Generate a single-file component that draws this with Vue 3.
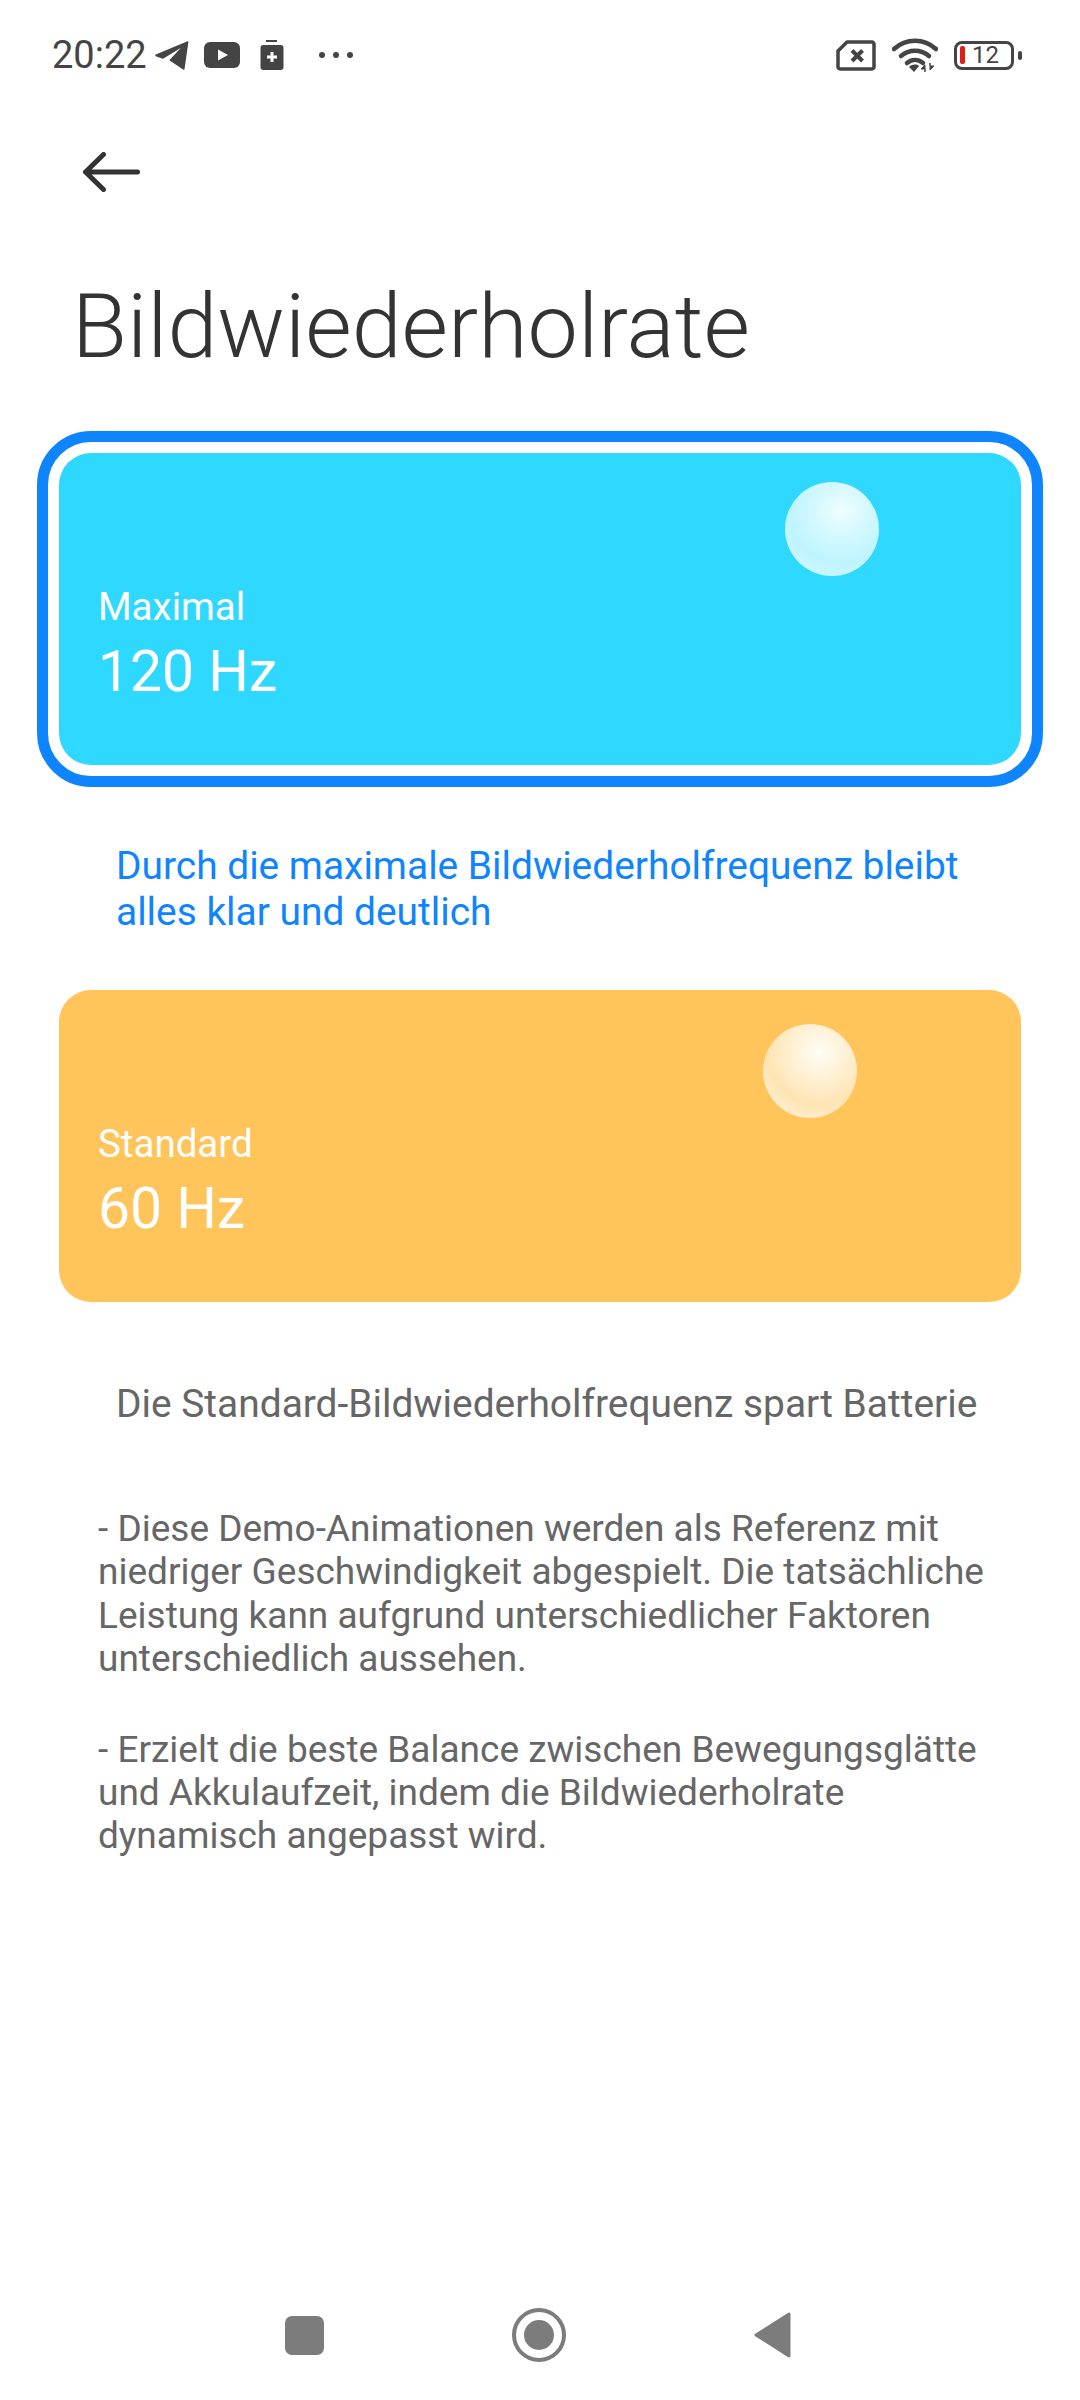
<script setup>
const notes = [
  '- Diese Demo-Animationen werden als Referenz mit niedriger Geschwindigkeit abgespielt. Die tatsächliche Leistung kann aufgrund unterschiedlicher Faktoren unterschiedlich aussehen.',
  '- Erzielt die beste Balance zwischen Bewegungsglätte und Akkulaufzeit, indem die Bildwiederholrate dynamisch angepasst wird.'
]
</script>

<template>
  <div class="page">
    <header class="status">
      <div class="status__left">
        <span class="time">20:22</span>
        <svg class="ic-telegram" width="34" height="29" viewBox="0 0 34 29">
          <path d="M.8 13.600 32.500.3c.6-.2 1 .2.9.8L29.600 27.800c-.1.900-.8 1.200-1.500.7L14.300 19.300 26 6.700 8.500 17.400c-.5.300-1 .3-1.500.1L.8 15.200c-.7-.3-.7-1.300 0-1.600Z" fill="#444" />
        </svg>
        <svg class="ic-youtube" width="36" height="26" viewBox="0 0 36 26">
          <rect x="0" y="0" width="36" height="26" rx="6" fill="#444" />
          <path d="M14 7.500v11l10-5.500Z" fill="#fff" />
        </svg>
        <svg class="ic-clip" width="24" height="30" viewBox="0 0 24 30">
          <rect x="6" y="0" width="11" height="2" fill="#444" />
          <rect x="0.500" y="5" width="23" height="25" rx="3" fill="#444" />
          <path d="M12 12v10M7 17h10" stroke="#fff" stroke-width="3" fill="none" />
        </svg>
        <svg class="ic-dots" width="34" height="8" viewBox="0 0 34 8">
          <circle cx="3" cy="4" r="3" fill="#444" />
          <circle cx="17" cy="4" r="3" fill="#444" />
          <circle cx="31" cy="4" r="3" fill="#444" />
        </svg>
      </div>
      <div class="status__right">
        <svg width="40" height="31" viewBox="0 0 40 31">
          <path d="M11 2h25c1 0 2 1 2 2v23c0 1-1 2-2 2H4c-1 0-2-1-2-2V11Z" fill="none" stroke="#444" stroke-width="3.500" stroke-linejoin="round" />
          <path d="M16 10.500l10.500 10.500M26.500 10.500 16 21" stroke="#444" stroke-width="4" fill="none" />
        </svg>
        <svg class="ic-wifi" width="46" height="35" viewBox="0 0 46 35">
          <path d="M2 11C14 0 32 0 44 11" fill="none" stroke="#444" stroke-width="4.500" stroke-linecap="round" />
          <path d="M9 18c8-7 20-7 28 0" fill="none" stroke="#444" stroke-width="4.500" stroke-linecap="round" />
          <path d="M15 25c5-4 11-4 16 0" fill="none" stroke="#444" stroke-width="4.500" stroke-linecap="round" />
          <path d="M17 29c3-3 8-3 10-1l-5 6Z" fill="#444" />
          <path d="M33 34v-7l-4 4h4ZM38 25v7l4-4h-4Z" fill="#444" stroke="#444" stroke-width="1" />
        </svg>
        <div class="battery">
          <div class="battery__body">
            <span class="battery__level"></span>
            <span class="battery__text">12</span>
          </div>
          <span class="battery__tip"></span>
        </div>
      </div>
    </header>

    <button class="back">
      <svg width="60" height="40" viewBox="0 0 60 40">
        <path d="M4.500 20h52M22.500 2.500 4.500 20l18 17.500" fill="none" stroke="#333" stroke-width="5" stroke-linecap="round" stroke-linejoin="round" />
      </svg>
    </button>

    <h1 class="title">Bildwiederholrate</h1>

    <div class="selected">
      <div class="card card--blue">
        <span class="ball ball--blue"></span>
        <div class="card__label">Maximal</div>
        <div class="card__value">120 Hz</div>
      </div>
    </div>
    <p class="desc desc--active">Durch die maximale Bildwiederholfrequenz bleibt alles klar und deutlich</p>

    <div class="card card--orange">
      <span class="ball ball--orange"></span>
      <div class="card__label">Standard</div>
      <div class="card__value">60 Hz</div>
    </div>
    <p class="desc desc--plain">Die Standard-Bildwiederholfrequenz spart Batterie</p>

    <div class="notes">
      <p v-for="note in notes" :key="note">{{ note }}</p>
    </div>

    <nav class="nav">
      <span class="nav__square"></span>
      <span class="nav__home"><i></i></span>
      <svg width="37" height="46" viewBox="0 0 37 46">
        <path d="M35 2 2 23 35 44Z" fill="#7c7c7c" stroke="#7c7c7c" stroke-width="3" stroke-linejoin="round" />
      </svg>
    </nav>
  </div>
</template>

<style>
html, body {
  margin: 0;
  background: #fff;
}
</style>

<style scoped>
.page {
  width: 1080px;
  height: 2400px;
  box-sizing: border-box;
  display: flex;
  flex-direction: column;
  background: #fff;
  font-family: Roboto, "Noto Sans", sans-serif;
  overflow: hidden;
}

.status {
  height: 54px;
  flex: none;
  padding: 28px 58px 0 52px;
  display: flex;
  justify-content: space-between;
  align-items: center;
}

.status__left, .status__right {
  display: flex;
  align-items: center;
}

.time {
  font-size: 38px;
  color: #444;
  margin-right: 8px;
}

.ic-telegram { margin-right: 15px; }
.ic-youtube { margin-right: 20px; }
.ic-clip { margin-right: 35px; }

.status__right {
  gap: 16px;
}

.battery {
  display: flex;
  align-items: center;
  gap: 4px;
}

.battery__body {
  width: 60px;
  height: 29px;
  box-sizing: border-box;
  border: 3px solid #444;
  border-radius: 8px;
  display: flex;
  align-items: center;
  padding-left: 3px;
  gap: 7px;
}

.battery__level {
  width: 5px;
  height: 18px;
  background: #e21c1c;
  border-radius: 2px;
}

.battery__text {
  font-size: 24px;
  line-height: 24px;
  color: #444;
}

.battery__tip {
  width: 4px;
  height: 9px;
  background: #444;
  border-radius: 2px;
}

.back {
  display: block;
  align-self: flex-start;
  margin: 70px 0 0 81px;
  padding: 0;
  border: 0;
  background: none;
  line-height: 0;
}

.title {
  margin: 80px 0 0 72px;
  font-size: 89.800px;
  font-weight: 300;
  line-height: 110px;
  color: #333;
}

.selected {
  margin: 49px 0 0 37px;
  width: 1006px;
  box-sizing: border-box;
  padding: 11px;
  border: 11px solid #0f84ff;
  border-radius: 54px;
}

.card {
  position: relative;
  height: 312px;
  flex: none;
  box-sizing: border-box;
  padding: 132px 40px 0 39px;
  border-radius: 32px;
  color: #fff;
}

.card--blue { background: #2fd8ff; }

.card--orange {
  background: #ffc45a;
  margin: 0 59px;
}

.card__label {
  font-size: 38.500px;
  line-height: 44px;
}

.card__value {
  font-size: 57px;
  line-height: 66px;
  margin-top: 10px;
}

.ball {
  position: absolute;
  width: 94px;
  height: 94px;
  border-radius: 50%;
}

.ball--blue {
  left: 726px;
  top: 29px;
  background: radial-gradient(circle 70px at 60% 30%, #effeff 0, #d2f8ff 40%, #bff4ff 75%, #ccf6ff 100%);
}

.ball--orange {
  left: 704px;
  top: 34px;
  background: radial-gradient(circle 70px at 60% 30%, #fffdf7 0, #fff0d3 40%, #ffe4b3 75%, #ffeed0 100%);
}

.desc {
  margin: 0;
  font-size: 38.900px;
  line-height: 46px;
}

.desc--active {
  margin: 56px 60px 55px 116px;
  color: #0f84ff;
}

.desc--plain {
  margin: 79px 20px 0 116px;
  color: #666;
}

.notes {
  margin: 80px 60px 0 98px;
  font-size: 37px;
  line-height: 43.400px;
  color: #666;
}

.notes p {
  margin: 0 0 47px;
}

.nav {
  margin: auto 0 38px 285px;
  width: 506px;
  height: 54px;
  display: flex;
  justify-content: space-between;
  align-items: center;
}

.nav__square {
  width: 39px;
  height: 39px;
  background: #7c7c7c;
  border-radius: 7px;
}

.nav__home {
  width: 54px;
  height: 54px;
  box-sizing: border-box;
  border: 4.500px solid #7c7c7c;
  border-radius: 50%;
  display: flex;
  align-items: center;
  justify-content: center;
}

.nav__home i {
  display: block;
  width: 30px;
  height: 30px;
  background: #7c7c7c;
  border-radius: 50%;
}
</style>
